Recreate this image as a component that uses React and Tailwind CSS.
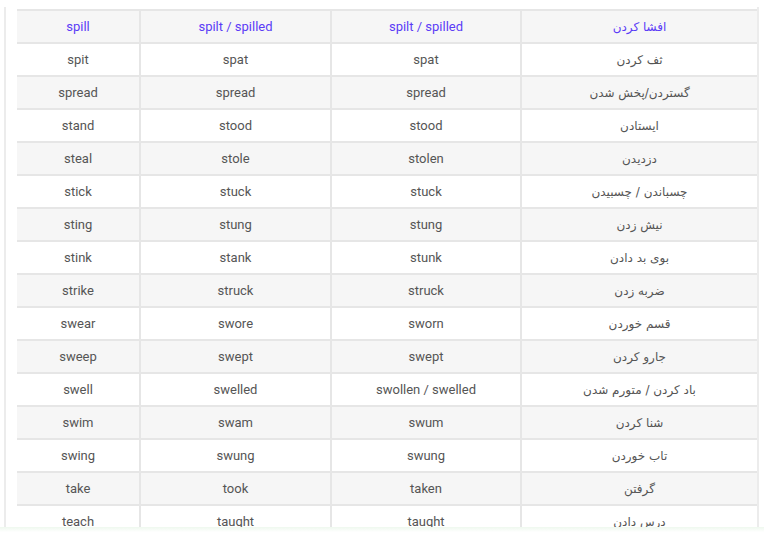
import React from "react";

const rows = [
  ["spill", "spilt / spilled", "spilt / spilled", "افشا کردن"],
  ["spit", "spat", "spat", "ثف کردن"],
  ["spread", "spread", "spread", "گستردن/پخش شدن"],
  ["stand", "stood", "stood", "ایستادن"],
  ["steal", "stole", "stolen", "دزدیدن"],
  ["stick", "stuck", "stuck", "چسباندن / چسبیدن"],
  ["sting", "stung", "stung", "نیش زدن"],
  ["stink", "stank", "stunk", "بوی بد دادن"],
  ["strike", "struck", "struck", "ضربه زدن"],
  ["swear", "swore", "sworn", "قسم خوردن"],
  ["sweep", "swept", "swept", "جارو کردن"],
  ["swell", "swelled", "swollen / swelled", "باد کردن / متورم شدن"],
  ["swim", "swam", "swum", "شنا کردن"],
  ["swing", "swung", "swung", "تاب خوردن"],
  ["take", "took", "taken", "گرفتن"],
  ["teach", "taught", "taught", "درس دادن"],
];

export default function App() {
  return (
    <div className="w-[764px] h-[536px] bg-white overflow-hidden">
      <div className="h-[7px]" />
      <div className="ml-[4px] w-[755px] h-[520px] overflow-hidden border-l-2 border-r-2 border-[#ececec] pl-[11px] pt-[2px]">
        <div className="border-t-2 border-[#e6e6e6]">
          {rows.map((r, i) => {
            const head = i === 0;
            const bg = i % 2 === 0 ? "bg-[#f6f6f6]" : "bg-white";
            const txt = head ? "text-[#5b3cf6]" : "text-[#555555]";
            return (
              <div
                key={i}
                className={`grid grid-cols-[124px_191px_190px_235px] h-[33px] border-b-2 border-[#e6e6e6] ${bg}`}
              >
                <div className={`flex items-center justify-center border-r-2 border-[#e6e6e6] text-[13px] ${txt}`} style={{ fontFamily: "Roboto, sans-serif" }}>
                  {r[0]}
                </div>
                <div className={`flex items-center justify-center border-r-2 border-[#e6e6e6] text-[13px] ${txt}`} style={{ fontFamily: "Roboto, sans-serif" }}>
                  {r[1]}
                </div>
                <div className={`flex items-center justify-center border-r-2 border-[#e6e6e6] text-[13px] ${txt}`} style={{ fontFamily: "Roboto, sans-serif" }}>
                  {r[2]}
                </div>
                <div dir="rtl" className={`flex items-center justify-center text-[12px] ${txt}`} style={{ fontFamily: "'DejaVu Sans', Tahoma, sans-serif" }}>
                  {r[3]}
                </div>
              </div>
            );
          })}
        </div>
      </div>
      <div className="h-[5px] bg-gradient-to-b from-[#eef8ee] to-white" />
    </div>
  );
}
